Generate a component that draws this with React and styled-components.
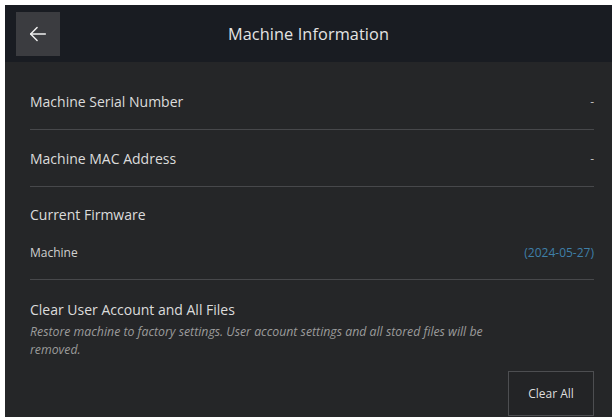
import React from "react";
import styled, { createGlobalStyle } from "styled-components";

const GlobalStyle = createGlobalStyle`
  html, body {
    margin: 0;
    padding: 0;
    background: #ffffff;
  }
  body {
    font-family: "Open Sans", "Noto Sans", sans-serif;
  }
`;

const Page = styled.div`
  padding: 5px 3px 3px 5px;
  height: 420px;
  box-sizing: border-box;
`;

const Panel = styled.div`
  width: 607px;
  height: 412px;
  display: flex;
  flex-direction: column;
  background: #252628;
  overflow: hidden;
`;

const Header = styled.div`
  height: 57px;
  flex-shrink: 0;
  display: grid;
  grid-template-columns: 44px 1fr 44px;
  align-items: center;
  padding: 0 11px;
  background: #191c22;
`;

const BackButton = styled.button`
  width: 44px;
  height: 44px;
  margin-top: 1px;
  border: none;
  padding: 0;
  background: #3b3c40;
  color: #f0f0f0;
  display: flex;
  align-items: center;
  justify-content: center;
  cursor: pointer;
`;

const Title = styled.h1`
  margin: 0;
  text-align: center;
  font-size: 16.3px;
  font-weight: 400;
  color: #e4e4e4;
  letter-spacing: 0.1px;
`;

const Body = styled.div`
  flex: 1;
  display: flex;
  flex-direction: column;
  padding: 11px 18px 0 25px;
`;

const Row = styled.div`
  display: flex;
  align-items: center;
  justify-content: space-between;
  height: ${(p) => p.height || 56}px;
  border-bottom: 1px solid #47484b;
`;

const Label = styled.span`
  font-size: ${(p) => (p.small ? 12 : 14)}px;
  color: ${(p) => (p.small ? "#d0d0d0" : "#dcdcdc")};
`;

const Value = styled.span`
  font-size: 12px;
  color: ${(p) => (p.accent ? "#3f7fa8" : "#bdbdbd")};
`;

const Group = styled.div`
  display: flex;
  flex-direction: column;
  border-bottom: 1px solid #47484b;
  padding: 18px 0 18px;
  gap: 20px;
`;

const SubRow = styled.div`
  display: flex;
  align-items: center;
  justify-content: space-between;
`;

const ResetSection = styled.div`
  display: flex;
  flex-direction: column;
  padding-top: 20px;
`;

const Note = styled.p`
  margin: 4px 0 0;
  max-width: 470px;
  font-size: 12.3px;
  line-height: 18px;
  font-style: italic;
  color: #9b9b9b;
`;

const Actions = styled.div`
  display: flex;
  justify-content: flex-end;
  margin-top: 12px;
`;

const OutlineButton = styled.button`
  width: 86px;
  height: 45px;
  background: #232426;
  border: 1px solid #4d4e51;
  color: #dedede;
  font-family: inherit;
  font-size: 12px;
  cursor: pointer;
`;

const ArrowLeft = () => (
  <svg width="22" height="22" viewBox="0 0 24 24" fill="none" stroke="currentColor" strokeWidth="1.6" strokeLinecap="round" strokeLinejoin="round">
    <path d="M20 12H4" />
    <path d="M11 5l-7 7 7 7" />
  </svg>
);

export default function App() {
  return (
    <>
      <GlobalStyle />
      <Page>
        <Panel>
          <Header>
            <BackButton aria-label="Back">
              <ArrowLeft />
            </BackButton>
            <Title>Machine Information</Title>
            <span />
          </Header>
          <Body>
            <Row height={56}>
              <Label>Machine Serial Number</Label>
              <Value>-</Value>
            </Row>
            <Row height={56}>
              <Label>Machine MAC Address</Label>
              <Value>-</Value>
            </Row>
            <Group>
              <Label>Current Firmware</Label>
              <SubRow>
                <Label small>Machine</Label>
                <Value accent>(2024-05-27)</Value>
              </SubRow>
            </Group>
            <ResetSection>
              <Label>Clear User Account and All Files</Label>
              <Note>
                Restore machine to factory settings. User account settings and all stored files will be removed.
              </Note>
              <Actions>
                <OutlineButton>Clear All</OutlineButton>
              </Actions>
            </ResetSection>
          </Body>
        </Panel>
      </Page>
    </>
  );
}
